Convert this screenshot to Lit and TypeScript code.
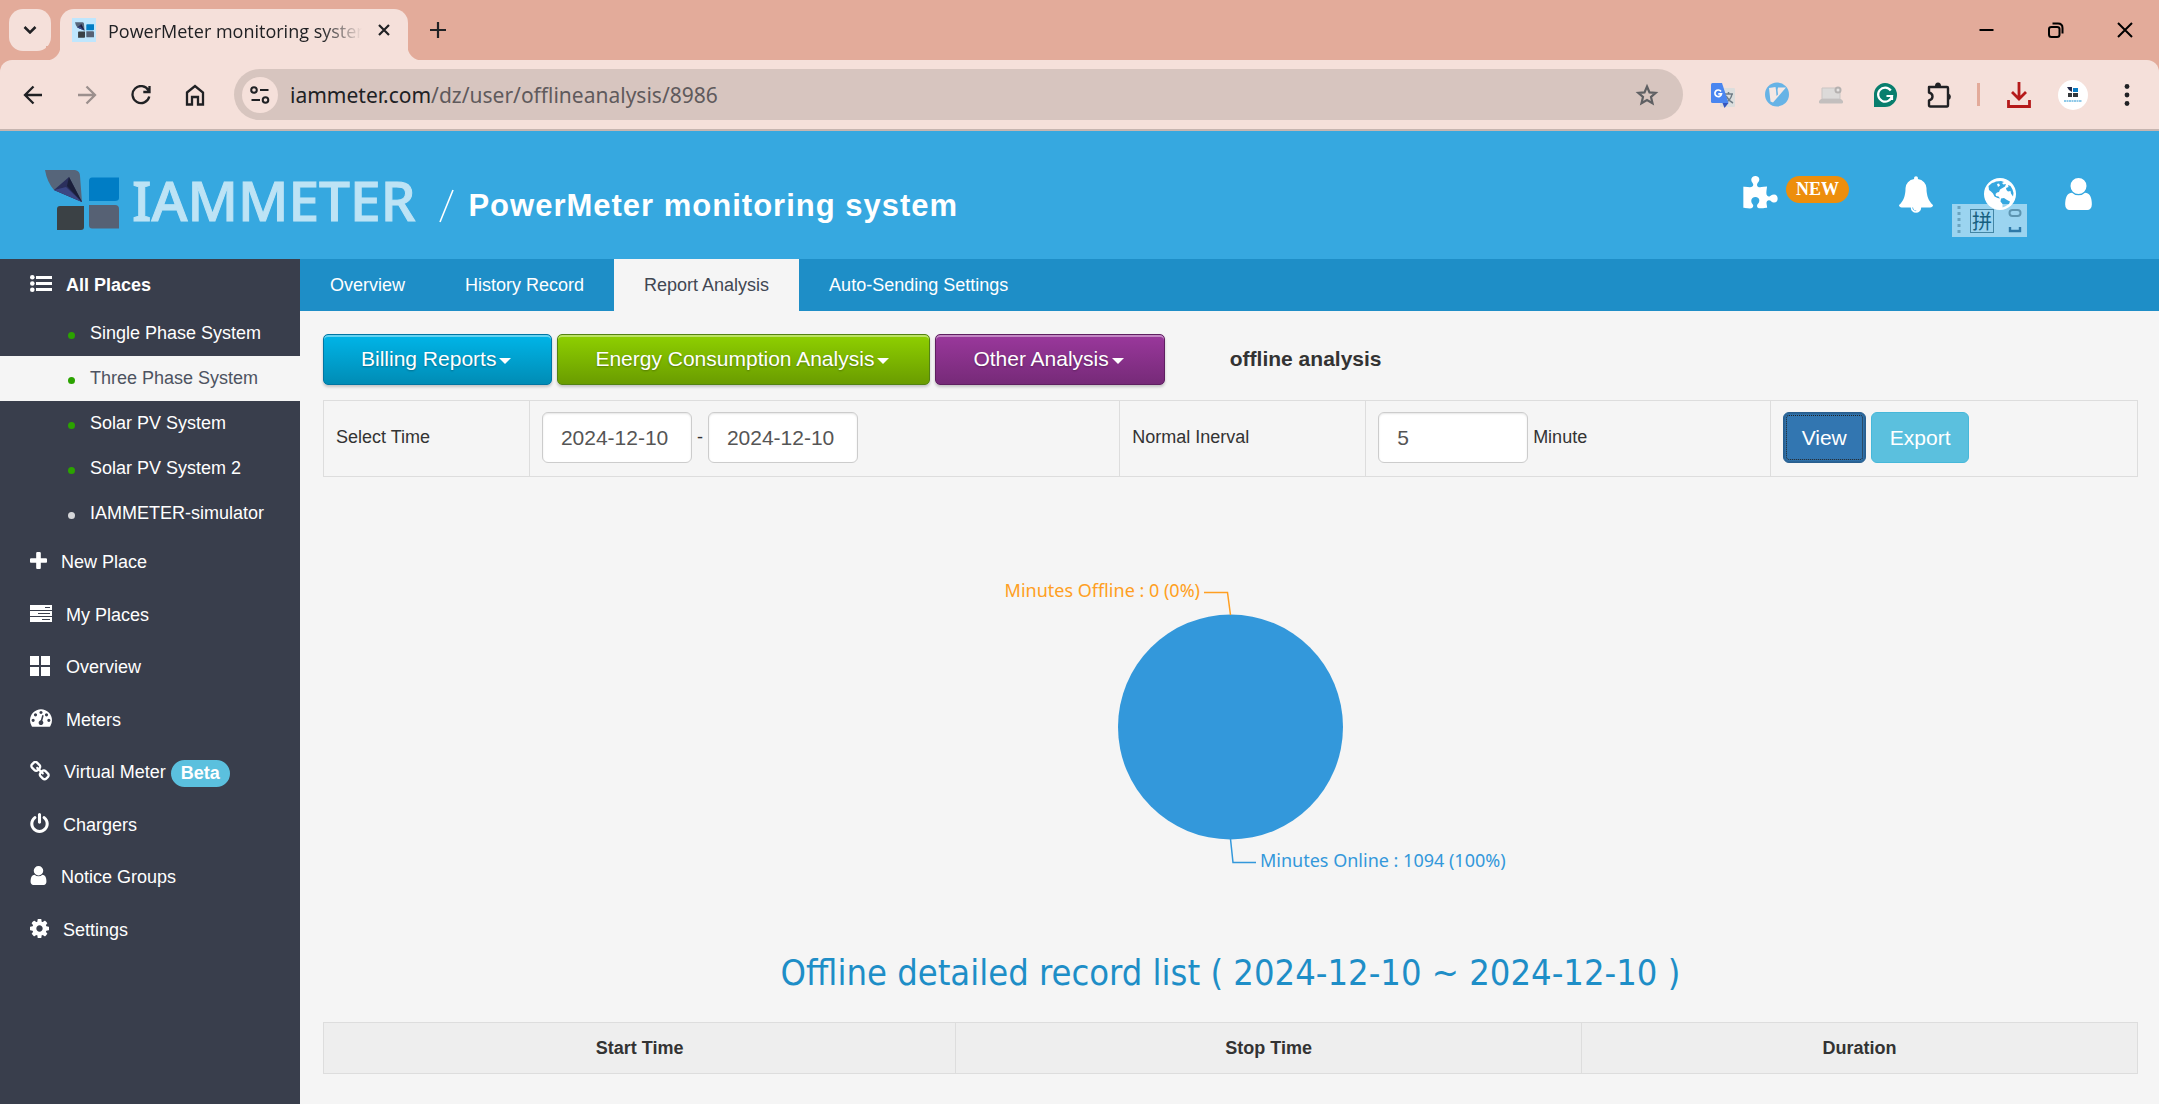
import { LitElement, html, svg, css } from "lit";
import { customElement } from "lit/decorators.js";

const P = {
  bell: "M912 1696q0-16-16-16-59 0-101.500-42.500t-42.500-101.500q0-16-16-16t-16 16q0 73 51.500 124.500t124.500 51.500q16 0 16-16zm816-288q0 52-38 90t-90 38h-448q0 106-75 181t-181 75-181-75-75-181h-448q-52 0-90-38t-38-90q50-42 91-88t85-119.500 74.500-158.500 50-206 19.500-260q0-152 117-282.500t307-158.500q-8-19-8-39 0-40 28-68t68-28 68 28 28 68q0 20-8 39 190 28 307 158.500t117 282.500q0 139 19.500 260t50 206 74.500 158.500 85 119.500 91 88z",
  user: "M1536 1399q0 109-62.500 187t-150.500 78h-854q-88 0-150.500-78t-62.500-187q0-85 8.500-160.500t31.500-152 58.500-131 94-89 134.500-34.500q131 128 313 128t313-128q76 0 134.500 34.500t94 89 58.500 131 31.500 152 8.500 160.500zm-256-887q0 159-112.500 271.500t-271.500 112.500-271.500-112.500-112.500-271.500 112.500-271.500 271.500-112.500 271.500 112.500 112.500 271.500z",
  plus: "M1600 736v192q0 40-28 68t-68 28h-416v416q0 40-28 68t-68 28h-192q-40 0-68-28t-28-68v-416h-416q-40 0-68-28t-28-68v-192q0-40 28-68t68-28h416v-416q0-40 28-68t68-28h192q40 0 68 28t28 68v416h416q40 0 68 28t28 68z",
  cog: "M1152 896q0-106-75-181t-181-75-181 75-75 181 75 181 181 75 181-75 75-181zm512-109v222q0 12-8 23t-20 13l-185 28q-19 54-39 91 35 50 107 138 10 12 10 25t-9 23q-27 37-99 108t-94 71q-12 0-26-9l-138-108q-44 23-91 38-16 136-29 186-7 28-36 28h-222q-14 0-24.500-8.500t-11.500-21.500l-28-184q-49-16-90-37l-141 107q-10 9-25 9-14 0-25-11-126-114-165-168-7-10-7-23 0-12 8-23 15-21 51-66.500t54-70.500q-27-50-41-99l-183-27q-13-2-21-12.500t-8-23.500v-222q0-12 8-23t19-13l186-28q14-46 39-92-40-57-107-138-10-12-10-24 0-10 9-23 26-36 98.500-107.500t94.500-71.500q13 0 26 10l138 107q44-23 91-38 16-136 29-186 7-28 36-28h222q14 0 24.500 8.500t11.500 21.500l28 184q49 16 90 37l142-107q9-9 24-9 13 0 25 10 129 119 165 170 7 8 7 22 0 12-8 23-15 21-51 66.500t-54 70.500q26 50 41 98l183 28q13 2 21 12.500t8 23.500z",
  power: "M1664 896q0 156-61 298t-164 245-245 164-298 61-298-61-245-164-164-245-61-298q0-182 80.500-343t226.500-270q43-32 95.500-25t83.500 50q32 42 24.500 94.500t-49.500 84.500q-98 74-151.500 181t-53.500 228q0 104 40.500 198.500t109.500 163.500 163.500 109.500 198.500 40.500 198.500-40.500 163.500-109.500 109.500-163.500 40.500-198.500q0-121-53.500-228t-151.500-181q-42-32-49.500-84.500t24.500-94.500q31-43 84-50t95 25q146 109 226.500 270t80.500 343zm-640-768v640q0 52-38 90t-90 38-90-38-38-90v-640q0-52 38-90t90-38 90 38 38 90z",
  link: "M1520 1216q0-40-28-68l-208-208q-28-28-68-28-42 0-72 32 3 3 19 18.500t21.500 21.500 15 19 13 25.500 3.500 27.500q0 40-28 68t-68 28q-15 0-27.500-3.500t-25.500-13-19-15-21.500-21.500-18.500-19q-33 31-33 73 0 40 28 68l206 207q27 27 68 27 40 0 68-26l147-146q28-28 28-67zm-703-705q0-40-28-68l-206-207q-28-28-68-28-39 0-68 27l-147 146q-28 28-28 67 0 40 28 68l208 208q27 27 68 27 42 0 72-31-3-3-19-18.500t-21.500-21.500-15-19-13-25.500-3.500-27.500q0-40 28-68t68-28q15 0 27.500 3.500t25.500 13 19 15 21.500 21.500 18.500 19q33-31 33-73zm895 705q0 120-85 203l-147 146q-83 83-203 83-121 0-204-85l-206-207q-83-83-83-203 0-123 88-209l-88-88q-86 88-208 88-120 0-204-84l-208-208q-84-84-84-204t85-203l147-146q83-83 203-83 121 0 204 85l206 207q83 83 83 203 0 123-88 209l88 88q86-88 208-88 120 0 204 84l208 208q84 84 84 204z",
  gauge: "M384 1152q0-53-37.500-90.500t-90.500-37.500-90.500 37.500-37.500 90.500 37.500 90.500 90.500 37.500 90.500-37.500 37.500-90.500zm192-448q0-53-37.500-90.500t-90.500-37.500-90.500 37.500-37.500 90.500 37.500 90.500 90.500 37.500 90.500-37.500 37.500-90.500zm428 481l101-382q6-26-7.500-48.500t-38.500-29.500-48 6.500-30 39.500l-101 382q-60 5-107 43.500t-63 98.500q-20 77 20 146t117 89 146-20 89-117q16-60-6-117t-72-91zm660-33q0-53-37.500-90.500t-90.500-37.500-90.500 37.500-37.500 90.500 37.500 90.500 90.500 37.500 90.500-37.500 37.500-90.500zm-640-640q0-53-37.500-90.500t-90.500-37.500-90.500 37.500-37.500 90.500 37.500 90.500 90.500 37.500 90.500-37.500 37.500-90.500zm448 192q0-53-37.500-90.500t-90.500-37.500-90.500 37.500-37.500 90.500 37.500 90.500 90.500 37.500 90.500-37.500 37.500-90.500zm320 448q0 261-141 483-19 29-54 29h-1402q-35 0-54-29-141-221-141-483 0-182 71-348t191-286 286-191 348-71 348 71 286 191 191 286 71 348z",
  puzzle: "M1728 1098q0 81-44.500 135t-123.500 54q-41 0-77.500-17.500t-59-38-56.500-38-71-17.500q-110 0-110 124 0 39 16 115t15 115v5q-22 0-33 1-34 3-97.500 11.500t-115.500 13.500-98 5q-61 0-103-26.500t-42-83.500q0-37 17.500-71t38-56.500 38-59 17.500-77.500q0-79-54-123.500t-135-44.500q-84 0-143 45.500t-59 127.500q0 43 15 83t33.500 64.500 33.500 53 15 50.500q0 45-46 89-37 35-117 35-95 0-245-24-9-2-27.500-4t-27.500-4l-13-2q-1 0-3-1-2 0-2-1v-1024q2 1 17.500 3.500t34 5 21.500 3.500q150 24 245 24 80 0 117-35 46-44 46-89 0-22-15-50.500t-33.500-53-33.500-64.500-15-83q0-82 59-127.500t144-45.500q80 0 134 44.500t54 123.500q0 41-17.500 77.500t-38 59-38 56.500-17.500 71q0 57 42 83.500t103 26.500q64 0 180-15t163-17v2q-1 2-3.500 17.500t-5 34-3.500 21.500q-24 150-24 245 0 80 35 117 44 46 89 46 22 0 50.500-15t53-33.500 64.500-33.500 83-15q82 0 127.500 59t45.500 143z",
};

const icon = (w: number, h: number, box: string, body: unknown) =>
  html`<svg class="icon" width=${w} height=${h} viewBox=${box} aria-hidden="true">${body}</svg>`;
const solid = (d: string) => svg`<path fill="currentColor" d=${d} />`;
const line = (d: string, w = 2) =>
  svg`<path fill="none" stroke="currentColor" stroke-width=${w} d=${d} />`;

const brandMark = svg`
  <path fill="#56657a" d="M0 0H30Q35 1 35 6L37 32L9 20Q2 12 0 0Z"/>
  <path fill="#2a2f5c" d="M24 7L9 20L37 32Z"/>
  <path fill="#3b4684" d="M9 20L21 17L37 32Z"/>
  <path fill="#1a1f3a" d="M24 7L22 16L37 32Z"/>
  <path fill="#007dc5" d="M47 7.500H74V28Q74 31 70 31H44V11Q44 7.500 47 7.500Z"/>
  <path fill="#3b4145" d="M15 36H39V57Q39 60 36 60H12V39Q12 36 15 36Z"/>
  <path fill="#566174" d="M44 35H70Q74 35 74 39V58.500H47Q44 58.500 44 55Z"/>`;

interface Item { label: string; icon: unknown; beta?: boolean }

const places = [
  { label: "Single Phase System", on: true },
  { label: "Three Phase System", on: true, current: true },
  { label: "Solar PV System", on: true },
  { label: "Solar PV System 2", on: true },
  { label: "IAMMETER-simulator", on: false },
];

const menu: Item[] = [
  { label: "New Place", icon: icon(17, 17, "192 128 1408 1408", solid(P.plus)) },
  { label: "My Places", icon: icon(22, 17, "0 0 22 17", svg`<path fill="currentColor" fill-rule="evenodd" d="M0 0H22V5H0ZM15 2V3H20V2ZM0 6H22V11H0ZM8 8V9H20V8ZM0 12H22V17H0ZM12 14V15H20V14Z"/>`) },
  { label: "Overview", icon: icon(22, 20, "0 0 22 20", solid("M0 0H9V9H0ZM11 0H20V9H11ZM0 11H9V20H0ZM11 11H20V20H11Z")) },
  { label: "Meters", icon: icon(22, 18, "0 256 1792 1408", solid(P.gauge)) },
  { label: "Virtual Meter", icon: icon(20, 20, "64 64 1664 1600", solid(P.link)), beta: true },
  { label: "Chargers", icon: icon(19, 20, "128 0 1536 1664", solid(P.power)) },
  { label: "Notice Groups", icon: icon(17, 19, "256 128 1280 1536", solid(P.user)) },
  { label: "Settings", icon: icon(19, 19, "128 128 1536 1536", solid(P.cog)) },
];

@customElement("browser-bar")
class BrowserBar extends LitElement {
  static styles = css`
    :host { display: block; background: #e3ab9a; color: #202124; font-family: "Open Sans", "Noto Sans", sans-serif; }
    button { border: 0; padding: 0; margin: 0; background: none; color: inherit; display: grid; place-items: center; flex: none; }
    .icon { display: block; }
    .strip { display: flex; height: 60px; padding-left: 9px; }
    .down { width: 42px; height: 42px; margin-top: 9px; border-radius: 14px; background: #f5e0da; }
    .tab { display: flex; align-items: center; width: 348px; box-sizing: border-box; margin: 9px 0 0 9px; padding: 0 14px 9px 12px; gap: 12px; background: #f5e0da; border-radius: 14px 14px 0 0; position: relative; }
    .tab::before, .tab::after { content: ""; position: absolute; bottom: 0; width: 14px; height: 14px; }
    .tab::before { right: 100%; background: radial-gradient(circle at 0 0, #e3ab9a 14px, #f5e0da 15px); }
    .tab::after { left: 100%; background: radial-gradient(circle at 100% 0, #e3ab9a 14px, #f5e0da 15px); }
    .fav { background: #bfe6fd; width: 24px; height: 24px; display: grid; place-items: center; flex: none; }
    .name { flex: 1; overflow: hidden; white-space: nowrap; font-size: 18px; line-height: 28px; padding-top: 1px; mask-image: linear-gradient(90deg, #000 84%, transparent); }
    .close { width: 20px; height: 20px; }
    .new { width: 40px; height: 42px; margin: 9px 0 0 10px; }
    .win { margin-left: auto; display: flex; color: #000; }
    .win button { width: 69px; }
    .tools { display: flex; align-items: center; height: 69px; background: #f5e0da; border-bottom: 2px solid #c6b5b0; border-radius: 12px 12px 0 0; padding-right: 5px; }
    .nav { display: flex; padding: 0 12px 0 6px; }
    .nav button { width: 54px; height: 42px; }
    .off { opacity: 0.42; }
    .omni { flex: 1; display: flex; align-items: center; height: 51px; border-radius: 26px; background: #d7c5bf; padding: 0 24px 0 8px; box-sizing: border-box; }
    .info { width: 36px; height: 36px; border-radius: 50%; background: #f5e0da; }
    .url { flex: 1; margin-left: 12px; font: 21px/28px "Noto Sans", "Open Sans", sans-serif; color: #5f5a5c; text-decoration: none; }
    .url b { font-weight: 400; color: #202124; }
    .star { color: #5f6063; }
    .ext { display: flex; align-items: center; padding-left: 13px; }
    .ext button { width: 54px; height: 42px; }
    .bar { width: 3px; height: 23px; background: #e3ab9a; margin: 0 12px 0 11px; }
    .avatar { width: 30px; height: 30px; border-radius: 50%; background: #fff; display: grid; place-items: center; }
  `;
  render() {
    return html`
      <div class="strip">
        <button class="down" aria-label="Search tabs">${icon(14, 8, "0 0 14 8", line("M1.500 1L7 6.500L12.500 1", 2.500))}</button>
        <div class="tab">
          <span class="fav">${icon(19, 16, "0 0 74 60", brandMark)}</span>
          <span class="name">PowerMeter monitoring system</span>
          <button class="close" aria-label="Close tab">${icon(12, 12, "0 0 12 12", line("M1 1L11 11M11 1L1 11", 2.200))}</button>
        </div>
        <button class="new" aria-label="New tab">${icon(16, 16, "0 0 16 16", line("M8 0V16M0 8H16", 2.200))}</button>
        <div class="win">
          <button aria-label="Minimize">${icon(15, 16, "0 0 15 16", line("M0.500 8H14.500"))}</button>
          <button aria-label="Restore">${icon(16, 16, "0 0 16 16", line("M3.500 5H9Q11.500 5 11.500 7V12.500Q11.500 15 9 15H3.500Q1 15 1 12.500V7Q1 5 3.500 5ZM4.500 1.500H10Q14.500 1.500 14.500 6V11.500"))}</button>
          <button aria-label="Close">${icon(16, 16, "0 0 16 16", line("M1 1L15 15M15 1L1 15"))}</button>
        </div>
      </div>
      <div class="tools">
        <div class="nav">
          <button aria-label="Back">${icon(20, 20, "0 0 20 20", line("M19 10H2M10.500 1.500L2 10L10.500 18.500", 2.300))}</button>
          <button class="off" aria-label="Forward">${icon(20, 20, "0 0 20 20", line("M1 10H18M9.500 1.500L18 10L9.500 18.500", 2.300))}</button>
          <button aria-label="Reload">${icon(20, 20, "0 0 20 20", line("M17.500 5.500A8.500 8.500 0 1 0 18.300 11.500M18.500 1V7H12.300", 2.300))}</button>
          <button aria-label="Home">${icon(20, 22, "0 0 20 22", line("M2 8.500L10 2L18 8.500V20.500H13V13H7V20.500H2Z", 2.300))}</button>
        </div>
        <div class="omni">
          <button class="info" aria-label="Site information">${icon(20, 18, "0 0 20 18", svg`<g fill="none" stroke="currentColor" stroke-width="2"><circle cx="4" cy="4" r="2.800"/><path d="M10 4H18.500M1.500 14H10"/><circle cx="15.500" cy="14" r="2.800"/></g>`)}</button>
          <a class="url" href="#"><b>iammeter.com</b>/dz/user/offlineanalysis/8986</a>
          <button class="star" aria-label="Bookmark">${icon(24, 24, "0 0 24 24", svg`<path fill="none" stroke="currentColor" stroke-width="2.200" d="M12 3.500L14.500 9.400L20.700 9.900L16 14L17.500 20.200L12 17L6.500 20.200L8 14L3.300 9.900L9.500 9.400Z"/>`)}</button>
        </div>
        <div class="ext">
          <button aria-label="Translate">${icon(24, 26, "0 0 24 26", svg`
            <rect x="9" y="6" width="15" height="19" rx="1" fill="#dcdedd"/>
            <path d="M13 12H22M17.500 10V12M21 12Q20 18 14 21M15 14Q18 19 22 21" stroke="#6f7d86" stroke-width="1.500" fill="none"/>
            <path d="M1.500 1H11L17.500 21H1.500Q0 21 0 19.500V2.500Q0 1 1.500 1Z" fill="#4a86f0"/><path d="M11.500 21H17.500L13.500 26Z" fill="#3555bd"/>
            <path d="M10 9.500A3.300 3.300 0 1 0 10.500 11.800H7.300" stroke="#fff" stroke-width="1.700" fill="none"/>`)}</button>
          <button aria-label="Vimium">${icon(24, 25, "0 0 24 25", svg`
            <circle cx="12" cy="12.500" r="12" fill="#66b3e6"/>
            <path d="M4 6L10.500 5L11 8L11.500 14L13 12.500L12.500 8L13 5.500H21L8 20.500L5.500 19.500Z" fill="#f5e8e4"/>`)}</button>
          <button aria-label="Screen extension">${icon(26, 18, "0 0 26 18", svg`
            <path d="M4 2H22V13H4Z" fill="#dcdad9" stroke="#c9c5c4" stroke-width="1"/><path d="M3 13H23L25 15V16.500Q25 17.500 23.500 17.500H2.500Q1 17.500 1 16.500V15Z" fill="#c3bfbe"/>
            <circle cx="20" cy="4" r="3.500" fill="#b5b1b0"/><circle cx="20" cy="4" r="1.500" fill="#e6e3e2"/>`)}</button>
          <button aria-label="Grammarly">${icon(24, 24, "0 0 24 24", svg`
            <path d="M12 0A12 12 0 1 1 12 24H1V12A11.500 11.500 0 0 1 12 0Z" fill="#087e6d"/>
            <path d="M17.800 7.500A7 7 0 1 0 19 13H13.500M19 13V17" stroke="#fff" stroke-width="2.200" fill="none"/>`)}</button>
          <button aria-label="Extensions">${icon(25, 26, "0 0 25 26", svg`
            <path fill="none" stroke="currentColor" stroke-width="2.400" stroke-linejoin="round" d="M2 5H20Q21 5 21 6V23Q21 24.500 20 24.500H3.500Q2 24.500 2 23V18.500Q5.500 17.500 5.500 14.500T2 10.500Z"/>
            <path fill="currentColor" d="M8 4A3 3.500 0 0 1 14 4ZM21.500 11.500A3.400 3.400 0 0 1 21.500 18Z"/>`)}</button>
          <span class="bar"></span>
          <button aria-label="Downloads">${icon(24, 26, "0 0 24 26", svg`<path fill="none" stroke="#b51a1a" stroke-width="2.800" d="M12 0V16M5 10L12 17L19 10M1.500 18V24.500H22.500V18"/>`)}</button>
          <button aria-label="Profile"><span class="avatar">${icon(20, 18, "0 0 20 18", svg`
            <path fill="#242a4a" d="M4 1H9V6L6 4Z"/><path fill="#0a7cc4" d="M10 2H15V6H10Z"/><path fill="#34383c" d="M5 7H9V11H5ZM10 7H15V11H10Z"/><path stroke="#8fc9e8" stroke-width="2" stroke-dasharray="2 0.500" d="M1 15H19"/>`)}</span></button>
          <button aria-label="Menu">${icon(6, 22, "0 0 6 22", svg`<g fill="currentColor"><circle cx="3" cy="2.500" r="2.400"/><circle cx="3" cy="11" r="2.400"/><circle cx="3" cy="19.500" r="2.400"/></g>`)}</button>
        </div>
      </div>`;
  }
}

@customElement("site-header")
class SiteHeader extends LitElement {
  static styles = css`
    :host { display: flex; align-items: center; height: 128px; background: #36a8e0; color: #fff; padding: 0 66px 0 45px; box-sizing: border-box; position: relative; }
    .icon { display: block; }
    .brand { display: flex; align-items: center; gap: 13px; color: #bde3f5; text-decoration: none; font: 500 55px/60px "Noto Sans", sans-serif; -webkit-text-stroke: 1px #bde3f5; padding-top: 10px; }
    .slash { margin: 22px 14px 0 24px; }
    h1 { margin: 22px 0 0; font: 700 31px/40px "Liberation Sans", Arial, sans-serif; letter-spacing: 1px; }
    .acts { margin-left: auto; display: flex; align-items: flex-start; padding-bottom: 2px; }
    .acts a { color: inherit; display: flex; align-items: flex-start; text-decoration: none; }
    .badge { margin: 0 50px 0 8px; padding: 0 10px; border-radius: 14px; background: #ed8e0c; font: 700 18px/27px "Liberation Serif", serif; }
    .globe { margin: 2px 48px 0 51px; }
    .user { margin-top: 2px; }
    .ime { position: absolute; right: 132px; top: 73px; width: 75px; height: 33px; background: rgba(255, 255, 255, 0.5); display: flex; align-items: center; gap: 9px; padding: 0 5px; box-sizing: border-box; color: #17607f; }
    .key { border: 1px solid #4486a5; font: 20px/22px "Noto Sans CJK SC", sans-serif; padding: 0 1px; margin-right: 5px; }
  `;
  render() {
    return html`
      <a class="brand" href="#">${icon(74, 60, "0 0 74 60", brandMark)}<span>IAMMETER</span></a>
      <span class="slash">${icon(15, 34, "0 0 15 34", line("M14 1L1 33", 1.600))}</span>
      <h1>PowerMeter monitoring system</h1>
      <nav class="acts" aria-label="Account">
        <a href="#" aria-label="Integrations">${icon(35, 33, "64 0 1664 1600", solid(P.puzzle))}<span class="badge">NEW</span></a>
        <a href="#" aria-label="Notifications">${icon(34, 37, "64 0 1664 1792", solid(P.bell))}</a>
        <a class="globe" href="#" aria-label="Language">${icon(32, 32, "0 0 32 32", svg`
          <circle cx="16" cy="16" r="16" fill="#fff"/>
          <path fill="#36a8e0" d="M4.500 8L8 5L10 4.500L12 3.500L17 3L20 4L18 5L19.500 6.500L22 6L21 8.500L18.500 10L16 11.500L15 14L13 14.500L11.500 16L12 18L14.500 18.500L16 20.500L13.500 20L10.500 18.500L9 15.500L7 13.500L5 12Z"/>
          <path fill="#36a8e0" d="M24 7L26.500 8L28.500 11.500L29.500 15L29 18.500L27 15.500L26.500 13L24 13.500L22.500 12L22 10L24.500 9Z"/>
          <path fill="#36a8e0" d="M17 20.500L20 20L23 22L26 23.500L25 26L21 28.500L18.500 29.500L18.500 26L16.500 23.500Z"/>
          <path fill="#fff" d="M13 6L15 5.500L16 7.500L14 9Z"/>`)}</a>
        <a class="user" href="#" aria-label="Account">${icon(29, 32, "256 128 1280 1536", solid(P.user))}</a>
      </nav>
      <div class="ime" role="img" aria-label="Input method">
        ${icon(4, 31, "0 0 4 31", svg`<path d="M2 1V31" stroke="#6aa3bf" stroke-width="3" stroke-dasharray="3 3"/>`)}
        <span class="key" lang="zh">拼</span>
        ${icon(14, 26, "0 0 14 26", svg`<rect x="1.500" y="2" width="11" height="6" rx="3" fill="none" stroke="#5d95b1" stroke-width="2"/><path d="M2 19V23H12V19" fill="none" stroke="#2e79a8" stroke-width="2.400"/>`)}
      </div>`;
  }
}

@customElement("side-menu")
class SideMenu extends LitElement {
  static styles = css`
    :host { display: block; background: #393e4c; color: #fff; font: 18px/20px "Liberation Sans", Arial, sans-serif; }
    ul { list-style: none; margin: 0; padding: 0; }
    a { color: inherit; text-decoration: none; display: flex; align-items: center; }
    .icon { display: block; flex: none; margin-bottom: 3px; }
    .all { height: 52px; padding-left: 30px; gap: 14px; font-weight: 700; }
    .place { height: 45px; padding-left: 68px; gap: 15px; box-sizing: border-box; padding-bottom: 1px; }
    .dot { width: 7px; height: 7px; border-radius: 50%; background: #d5d6d9; margin-top: 5px; }
    .on { background: #2ba300; }
    .current { background: #f5f5f5; color: #4d5361; }
    .menu { display: grid; grid-auto-rows: 1fr; height: 420px; }
    .menu a { height: 100%; padding-left: 30px; gap: 14px; box-sizing: border-box; }
    .beta { background: #5bc0de; border-radius: 14px; font-weight: 700; line-height: 27px; padding: 0 10px; margin: 2px 0 0 -9px; }
  `;
  render() {
    return html`<nav aria-label="Main">
      <a class="all" href="#">${icon(22, 17, "0 0 22 17", svg`<g fill="currentColor"><circle cx="2.300" cy="2.300" r="2.300"/><circle cx="2.300" cy="8.500" r="2.300"/><circle cx="2.300" cy="14.700" r="2.300"/><path d="M6 1H22V4H6ZM6 7H22V10H6ZM6 13H22V16H6Z"/></g>`)}All Places</a>
      <ul>${places.map((p) => html`<li><a class="place ${p.current ? "current" : ""}" href="#"><span class="dot ${p.on ? "on" : ""}"></span>${p.label}</a></li>`)}</ul>
      <ul class="menu">${menu.map((m) => html`<li><a href="#">${m.icon}<span>${m.label}</span>${m.beta ? html`<span class="beta">Beta</span>` : ""}</a></li>`)}</ul>
    </nav>`;
  }
}

@customElement("report-page")
class ReportPage extends LitElement {
  static styles = css`
    :host { display: block; background: #f5f5f5; color: #333; font: 18px/26px "Liberation Sans", Arial, sans-serif; }
    .tabs { display: flex; background: #1e8ec7; }
    .tabs a { padding: 0 30px; line-height: 52px; color: #fff; text-decoration: none; }
    .tabs .on { background: #f5f5f5; color: #414753; }
    main { padding: 23px 21px 30px 23px; }
    .row { display: flex; align-items: center; gap: 5px; }
    .drop { height: 51px; border: 1px solid; border-radius: 5px; padding: 0 40px 1px 37px; color: #fff; font: 21px/26px "Liberation Sans", Arial, sans-serif; text-shadow: 0 1px 2px rgba(0, 0, 0, 0.3); box-shadow: inset 0 2px 0 rgba(255, 255, 255, 0.4), 0 2px 3px rgba(0, 0, 0, 0.2); display: flex; align-items: center; gap: 3px; }
    .blue { background: linear-gradient(#00b5e8, #008cb5); border-color: #0076a3; }
    .green { background: linear-gradient(#8fd000, #6a9c00); border-color: #538312; }
    .purple { background: linear-gradient(#9a389c, #762a78); border-color: #5f2061; }
    .caret { border: 6px solid transparent; border-top-color: #fff; border-bottom: 0; margin-top: 4px; }
    h2 { margin: 0 0 2px 60px; font-size: 21px; line-height: 26px; }
    table { border-collapse: collapse; table-layout: fixed; width: 100%; }
    td, th { border: 1px solid #ddd; box-sizing: border-box; }
    .filter { margin-top: 15px; }
    .filter td { height: 76px; padding: 0 12px 2px; }
    .filter label { display: block; }
    .cell { display: flex; align-items: center; gap: 5px; }
    .filter label, .cell span { padding-bottom: 2px; }
    input { width: 150px; height: 51px; box-sizing: border-box; border: 1px solid #ccc; border-radius: 6px; padding: 0 18px; background: #fff; color: #555; font: 21px/26px "Liberation Sans", Arial, sans-serif; box-shadow: inset 0 1px 2px rgba(0, 0, 0, 0.1); }
    .btn { height: 51px; border: 1px solid #46b8da; border-radius: 6px; padding: 0 18px; background: #5bc0de; color: #fff; font: 21px/26px "Liberation Sans", Arial, sans-serif; }
    .view { background: #3276b1; border-color: #285e8e; box-shadow: inset 0 0 2px 1px rgba(0, 0, 0, 0.2); outline: 1px dotted #222; outline-offset: -4px; }
    .chart { display: flex; justify-content: center; padding-top: 94px; }
    .chart svg { display: block; font: 18px "Noto Sans", "Open Sans", sans-serif; }
    h3 { margin: 55px 0 22px; text-align: center; color: #1e8ec7; font: 400 36px/54px "DejaVu Sans Condensed", "DejaVu Sans", sans-serif; }
    .list th { height: 51px; padding: 0 12px; background: #eee; }
  `;
  render() {
    const drop = (label: string, tone: string) =>
      html`<button class="drop ${tone}" aria-haspopup="menu">${label}<span class="caret"></span></button>`;
    return html`
      <nav class="tabs" aria-label="Place">
        <a href="#">Overview</a><a href="#">History Record</a><a class="on" href="#">Report Analysis</a><a href="#">Auto-Sending Settings</a>
      </nav>
      <main>
        <div class="row">
          ${drop("Billing Reports", "blue")}${drop("Energy Consumption Analysis", "green")}${drop("Other Analysis", "purple")}
          <h2>offline analysis</h2>
        </div>
        <table class="filter">
          <colgroup><col width="11.35%" /><col width="32.55%" /><col width="13.55%" /><col width="22.3%" /><col width="20.25%" /></colgroup>
          <tr>
            <td><label for="from">Select Time</label></td>
            <td><div class="cell"><input id="from" value="2024-12-10" /><span>-</span><input aria-label="End date" value="2024-12-10" /></div></td>
            <td><label for="gap">Normal Inerval</label></td>
            <td><div class="cell"><input id="gap" value="5" /><span>Minute</span></div></td>
            <td><div class="cell"><button class="btn view">View</button><button class="btn">Export</button></div></td>
          </tr>
        </table>
        <div class="chart">
          <svg width="640" height="320" viewBox="0 0 640 320" role="img" aria-label="Minutes online and offline">
            <circle cx="319.500" cy="156" r="112.500" fill="#3398db" />
            <path d="M293 21.500H316.500L319.500 44" fill="none" stroke="#ff9f22" stroke-width="1.500" />
            <text x="289" y="26" text-anchor="end" fill="#ff9f22">Minutes Offline : 0 (0%)</text>
            <path d="M319.500 268L322 291.500H345" fill="none" stroke="#3398db" stroke-width="1.500" />
            <text x="349" y="296" fill="#3398db">Minutes Online : 1094 (100%)</text>
          </svg>
        </div>
        <h3>Offline detailed record list ( 2024-12-10 ~ 2024-12-10 )</h3>
        <table class="list">
          <colgroup><col width="34.85%" /><col width="34.5%" /><col width="30.65%" /></colgroup>
          <thead><tr><th scope="col">Start Time</th><th scope="col">Stop Time</th><th scope="col">Duration</th></tr></thead>
        </table>
      </main>`;
  }
}

@customElement("app-root")
class AppRoot extends LitElement {
  static styles = css`
    :host { display: flex; flex-direction: column; min-height: 100vh; }
    .body { flex: 1; display: grid; grid-template-columns: 300px minmax(0, 1fr); }
  `;
  render() {
    return html`<browser-bar></browser-bar><site-header></site-header>
      <div class="body"><side-menu></side-menu><report-page></report-page></div>`;
  }
}
